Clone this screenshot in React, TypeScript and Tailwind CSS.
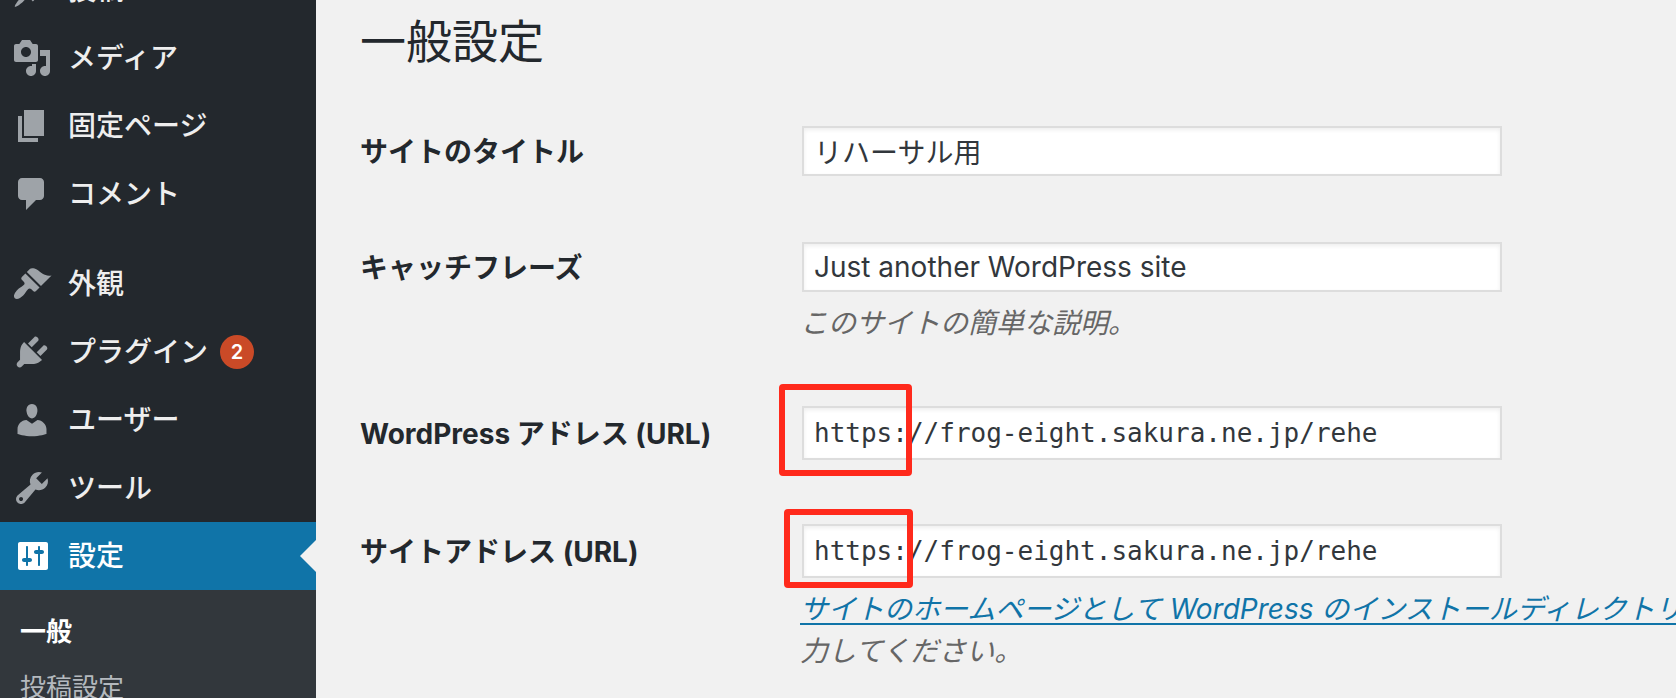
import type { ReactNode } from "react";

const ICONS = {
  post: "M10.44 3.02l1.82-1.82 6.36 6.35-1.83 1.82c-1.05-.68-2.48-.57-3.41.36l-.75.75c-.92.93-1.04 2.35-.35 3.41l-1.83 1.82-2.41-2.41-2.8 2.79c-.42.42-3.38 2.71-3.8 2.29s1.86-3.39 2.28-3.81l2.79-2.79L4.1 9.36l1.83-1.82c1.05.69 2.48.57 3.4-.36l.75-.75c.93-.92 1.05-2.35.36-3.41z",
  media:
    "M13 11V4c0-.55-.45-1-1-1h-1.67L9 1H5L3.67 3H2c-.55 0-1 .45-1 1v7c0 .55.45 1 1 1h10c.55 0 1-.45 1-1zM7 4.5c1.38 0 2.5 1.12 2.5 2.5S8.38 9.5 7 9.5 4.5 8.38 4.5 7 5.62 4.5 7 4.5zM14 6h5v10.5c0 1.38-1.12 2.5-2.5 2.5S14 17.88 14 16.5s1.12-2.5 2.5-2.5c.17 0 .34.02.5.05V9h-3V6zm-4 8.05V13h2v3.5c0 1.38-1.12 2.5-2.5 2.5S7 17.88 7 16.5 8.12 14 9.5 14c.17 0 .34.02.5.05z",
  page: "M6 15V2h10v13H6zm-1 1h8v2H3V5h2v11z",
  comments:
    "M5 2h9c1.1 0 2 .9 2 2v7c0 1.1-.9 2-2 2h-2l-5 5v-5H5c-1.1 0-2-.9-2-2V4c0-1.1.9-2 2-2z",
  appearance:
    "M14.48 11.06L7.41 3.99l1.5-1.5c.5-.56 2.3-.47 3.51.32 1.21.8 1.43 1.28 2.91 2.1 1.18.64 2.45 1.26 4.45.85zm-.71.71L6.7 4.7 4.93 6.47c-.39.39-.39 1.02 0 1.41l1.06 1.06c.39.39.39 1.03 0 1.42-.6.6-1.43 1.11-2.21 1.69-.35.26-.7.53-1.01.84C1.43 14.23.4 16.08 1.4 17.07c.99 1 2.84-.03 4.18-1.36.31-.31.58-.66.85-1.02.57-.78 1.08-1.61 1.69-2.21.39-.39 1.02-.39 1.41 0l1.06 1.06c.39.39 1.02.39 1.41 0z",
  plugins:
    "M13.11 4.36L9.87 7.6 8 5.73l3.24-3.24c.35-.34 1.05-.2 1.56.32.52.51.66 1.21.31 1.55zm-8 1.77l.91-1.12 9.01 9.01-1.19.84c-.71.71-2.63 1.16-3.82 1.16H6.14L4.9 17.26c-.59.59-1.54.59-2.12 0-.59-.58-.59-1.53 0-2.12l1.24-1.24v-3.88c0-1.13.4-3.19 1.09-3.89zm7.26 3.97l3.24-3.24c.34-.35 1.04-.21 1.55.31.52.51.66 1.21.31 1.55l-3.24 3.25z",
  users:
    "M10 9.25c-2.27 0-2.73-3.44-2.73-3.44C7 4.02 7.82 2 9.97 2c2.16 0 2.98 2.02 2.71 3.81 0 0-.41 3.44-2.68 3.44zm0 2.57L12.72 10c2.39 0 4.52 2.33 4.52 4.53v2.49s-3.65 1.13-7.24 1.13c-3.65 0-7.24-1.13-7.24-1.13v-2.49c0-2.25 1.94-4.48 4.47-4.48z",
  tools:
    "M16.68 9.77c-1.34 1.34-3.3 1.67-4.95.99l-5.41 6.52c-.99.99-2.59.99-3.58 0s-.99-2.59 0-3.57l6.52-5.42c-.68-1.65-.35-3.61.99-4.95 1.28-1.28 3.12-1.62 4.72-1.06l-2.89 2.89 2.82 2.82 2.86-2.87c.53 1.58.18 3.39-1.08 4.65zM3.81 16.21c.4.39 1.04.39 1.43 0 .4-.4.4-1.04 0-1.43-.39-.4-1.03-.4-1.43 0-.39.39-.39 1.03 0 1.43z",
  settings:
    "M18 16V4c0-.55-.45-1-1-1H4c-.55 0-1 .45-1 1v12c0 .55.45 1 1 1h13c.55 0 1-.45 1-1zM8 11h1c.55 0 1 .45 1 1s-.45 1-1 1H8v1.5c0 .28-.22.5-.5.5s-.5-.22-.5-.5V13H6c-.55 0-1-.45-1-1s.45-1 1-1h1V5.5c0-.28.22-.5.5-.5s.5.22.5.5V11zm5-2h-1c-.55 0-1-.45-1-1s.45-1 1-1h1V5.5c0-.28.22-.5.5-.5s.5.22.5.5V7h1c.55 0 1 .45 1 1s-.45 1-1 1h-1v5.5c0 .28-.22.5-.5.5s-.5-.22-.5-.5V9z",
};

type IconName = keyof typeof ICONS;

function Icon({ name }: { name: IconName }) {
  return (
    <svg viewBox="0 0 20 20" className="size-10 shrink-0 fill-current" aria-hidden="true">
      <path fillRule="evenodd" d={ICONS[name]} />
    </svg>
  );
}

function MenuItem({
  icon,
  label,
  badge,
  current = false,
}: {
  icon: IconName;
  label: string;
  badge?: number;
  current?: boolean;
}) {
  return (
    <li className={current ? "relative bg-[#1074a8] text-white" : "relative text-[#eeeeee]"}>
      <a href="#" className="flex h-[68px] items-center gap-4 pl-3 text-[28px]">
        <span className={current ? "text-white" : "text-[#9ea3a8]"}>
          <Icon name={icon} />
        </span>
        <span className="flex items-center gap-3">
          <span className="font-medium">{label}</span>
          {badge !== undefined && (
            <span className="flex size-[34px] items-center justify-center rounded-full bg-[#ca4a27] text-xl font-semibold text-white">
              {badge}
            </span>
          )}
        </span>
      </a>
      {current && (
        <span className="absolute top-1/2 right-0 -translate-y-1/2 border-y-16 border-r-16 border-y-transparent border-r-[#f1f1f1]" />
      )}
    </li>
  );
}

function Field({
  id,
  label,
  value,
  mono = false,
  highlight,
  className,
  children,
}: {
  id: string;
  label: string;
  value: string;
  mono?: boolean;
  highlight?: string;
  className: string;
  children?: ReactNode;
}) {
  return (
    <div className={`grid grid-cols-[442px_minmax(0,1fr)] ${className}`}>
      <label
        htmlFor={id}
        className={`self-start text-[28px] font-bold text-[#23282d] ${mono ? "leading-[56px]" : "leading-[52px]"}`}
      >
        {label}
      </label>
      <div>
        <div className="relative w-[700px] max-w-full">
          <input
            id={id}
            type="text"
            defaultValue={value}
            className={`block w-full border-2 border-[#dddddd] bg-white px-[10px] text-[#32373c] shadow-[inset_0_2px_4px_rgba(0,0,0,0.07)] outline-none ${
              mono ? "h-[54px] font-['DejaVu_Sans_Mono',monospace] text-[26px]" : "h-[50px] text-[28px]"
            }`}
          />
          {highlight && (
            <span
              className={`pointer-events-none absolute rounded-sm border-6 border-[#ff2a1c] ${highlight}`}
            />
          )}
        </div>
        {children}
      </div>
    </div>
  );
}

export default function App() {
  return (
    <div
      lang="ja"
      className="flex h-screen overflow-hidden bg-[#f1f1f1] font-['Inter','Noto_Sans_CJK_JP',sans-serif]"
    >
      <nav className="w-[316px] shrink-0 bg-[#23282d]">
        <ul className="-mt-11">
          <MenuItem icon="post" label="投稿" />
          <MenuItem icon="media" label="メディア" />
          <MenuItem icon="page" label="固定ページ" />
          <MenuItem icon="comments" label="コメント" />
          <li className="h-[22px]" role="separator" />
          <MenuItem icon="appearance" label="外観" />
          <MenuItem icon="plugins" label="プラグイン" badge={2} />
          <MenuItem icon="users" label="ユーザー" />
          <MenuItem icon="tools" label="ツール" />
          <MenuItem icon="settings" label="設定" current />
        </ul>
        <ul className="bg-[#32373c] px-5 py-[14px] text-[26px] leading-[56px] text-[#b4b9be]">
          <li>
            <a href="#" className="block font-bold text-white">
              一般
            </a>
          </li>
          <li>
            <a href="#" className="block">
              投稿設定
            </a>
          </li>
        </ul>
      </nav>

      <main className="min-w-0 flex-1 pl-11">
        <h1 className="pt-3 text-[46px] leading-[58px] text-[#23282d]">一般設定</h1>
        <form className="pt-14">
          <Field id="blogname" label="サイトのタイトル" value="リハーサル用" className="h-[116px]" />
          <Field
            id="blogdescription"
            label="キャッチフレーズ"
            value="Just another WordPress site"
            className="h-[164px]"
          >
            <p className="-ml-0.5 pt-2.5 text-[28px] leading-[42px] text-[#666666] italic">
              このサイトの簡単な説明。
            </p>
          </Field>
          <Field
            id="siteurl"
            label="WordPress アドレス (URL)"
            value="https://frog-eight.sakura.ne.jp/rehe"
            mono
            highlight="-top-[22px] -left-[23px] h-[92px] w-[133px]"
            className="h-[118px]"
          />
          <Field
            id="home"
            label="サイトアドレス (URL)"
            value="https://frog-eight.sakura.ne.jp/rehe"
            mono
            highlight="-top-[15px] -left-[18px] h-[79px] w-[129px]"
            className=""
          >
            <p className="-ml-0.5 pt-2.5 text-[28px] leading-[42px] whitespace-nowrap text-[#666666] italic">
              <a href="#" className="text-[#1074a8] underline decoration-2 underline-offset-4">
                サイトのホームページとして WordPress のインストールディレクトリ
              </a>
              <br />
              力してください。
            </p>
          </Field>
        </form>
      </main>
    </div>
  );
}
